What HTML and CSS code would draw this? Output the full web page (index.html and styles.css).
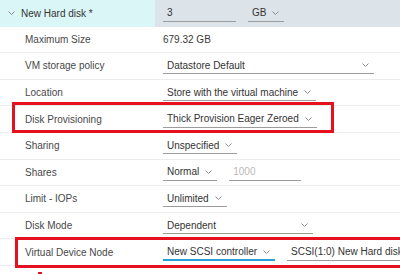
FILE: index.html
```html
<!DOCTYPE html>
<html>
<head>
<meta charset="utf-8">
<link rel="stylesheet" href="styles.css">
</head>
<body>
<div class="form">
  <div class="row head">
    <div class="label head-label"><svg class="chev head-chev" width="7" height="4" viewBox="0 0 7 4"><polyline points="0.5,0.5 3.5,3.5 6.5,0.5"/></svg>New Hard disk *</div>
    <div class="value head-value">
      <span class="ctl w-size">3</span>
      <span class="ctl sel">GB<svg class="chev" width="7" height="4" viewBox="0 0 7 4"><polyline points="0.5,0.5 3.5,3.5 6.5,0.5"/></svg></span>
    </div>
  </div>
  <div class="row">
    <div class="label">Maximum Size</div>
    <div class="value"><span class="plain">679.32 GB</span></div>
  </div>
  <div class="row">
    <div class="label">VM storage policy</div>
    <div class="value"><span class="ctl sel w-policy">Datastore Default<svg class="chev" width="7" height="4" viewBox="0 0 7 4"><polyline points="0.5,0.5 3.5,3.5 6.5,0.5"/></svg></span></div>
  </div>
  <div class="row">
    <div class="label">Location</div>
    <div class="value"><span class="ctl sel">Store with the virtual machine<svg class="chev" width="7" height="4" viewBox="0 0 7 4"><polyline points="0.5,0.5 3.5,3.5 6.5,0.5"/></svg></span></div>
  </div>
  <div class="row">
    <div class="label">Disk Provisioning</div>
    <div class="value"><span class="ctl sel">Thick Provision Eager Zeroed<svg class="chev" width="7" height="4" viewBox="0 0 7 4"><polyline points="0.5,0.5 3.5,3.5 6.5,0.5"/></svg></span></div>
  </div>
  <div class="row">
    <div class="label">Sharing</div>
    <div class="value"><span class="ctl sel">Unspecified<svg class="chev" width="7" height="4" viewBox="0 0 7 4"><polyline points="0.5,0.5 3.5,3.5 6.5,0.5"/></svg></span></div>
  </div>
  <div class="row">
    <div class="label">Shares</div>
    <div class="value">
      <span class="ctl sel">Normal<svg class="chev" width="7" height="4" viewBox="0 0 7 4"><polyline points="0.5,0.5 3.5,3.5 6.5,0.5"/></svg></span>
      <span class="ctl w-num placeholder">1000</span>
    </div>
  </div>
  <div class="row">
    <div class="label">Limit - IOPs</div>
    <div class="value"><span class="ctl sel">Unlimited<svg class="chev" width="7" height="4" viewBox="0 0 7 4"><polyline points="0.5,0.5 3.5,3.5 6.5,0.5"/></svg></span></div>
  </div>
  <div class="row">
    <div class="label">Disk Mode</div>
    <div class="value"><span class="ctl sel w-mode">Dependent<svg class="chev" width="7" height="4" viewBox="0 0 7 4"><polyline points="0.5,0.5 3.5,3.5 6.5,0.5"/></svg></span></div>
  </div>
  <div class="row">
    <div class="label">Virtual Device Node</div>
    <div class="value">
      <span class="ctl sel active">New SCSI controller<svg class="chev" width="7" height="4" viewBox="0 0 7 4"><polyline points="0.5,0.5 3.5,3.5 6.5,0.5"/></svg></span>
      <span class="ctl sel w-node">SCSI(1:0) New Hard disk</span>
    </div>
  </div>
</div>
<div class="mark mark-prov"></div>
<div class="mark mark-vdn"></div>
<div class="mark-tick"></div>
</body>
</html>
```

FILE: styles.css
```css
html, body {
  margin: 0;
  padding: 0;
  background: #ffffff;
  overflow: hidden;
}
body {
  width: 400px;
  height: 274px;
  position: relative;
  font-family: "Liberation Sans", Arial, sans-serif;
  font-size: 10px;
  color: #3a3a3a;
}
.form {
  width: 400px;
}
.row {
  display: grid;
  grid-template-columns: 155px 1fr;
  height: 26.6px;
  box-sizing: border-box;
  border-bottom: 1px solid #ececec;
}
.row.head {
  border-bottom: none;
}
.label {
  display: flex;
  align-items: center;
  padding-left: 25px;
  color: #484848;
  white-space: nowrap;
}
.head-label {
  background: #dbf6f7;
  padding-left: 8px;
  color: #333;
}
.head-value {
  background: #dce3e9;
}
.head-chev {
  margin-right: 6px;
  stroke: #7a7a7a;
}
.value {
  display: flex;
  align-items: center;
  gap: 12px;
  padding-left: 8px;
  white-space: nowrap;
  min-width: 0;
  overflow: visible;
}
.plain {
  padding-left: 0;
}
.ctl {
  display: inline-flex;
  align-items: center;
  box-sizing: border-box;
  height: 17px;
  padding: 0 5px 0 4px;
  border-bottom: 1px solid #9c9c9c;
  color: #333;
  flex: none;
}
.sel .chev {
  margin-left: 6px;
}
.chev {
  fill: none;
  stroke: #8e8e8e;
  stroke-width: 1;
  flex: none;
}
.w-size { width: 73px; }
.w-policy { width: 211px; justify-content: space-between; }
.w-mode { width: 150px; justify-content: space-between; }
.w-num { width: 72px; }
.w-node { width: 140px; }
.placeholder { color: #b9b9b9; }
.active { border-bottom: 2px solid #2a9fd8; padding-top: 1px; }
.mark {
  position: absolute;
  border: 3px solid #e5111f;
  box-sizing: border-box;
}
.mark-prov {
  left: 12px;
  top: 102px;
  width: 322px;
  height: 31px;
}
.mark-vdn {
  left: 15px;
  top: 237px;
  width: 400px;
  height: 31px;
}
.mark-tick {
  position: absolute;
  left: 38px;
  top: 272px;
  width: 4px;
  height: 2px;
  background: #e5111f;
}
```
